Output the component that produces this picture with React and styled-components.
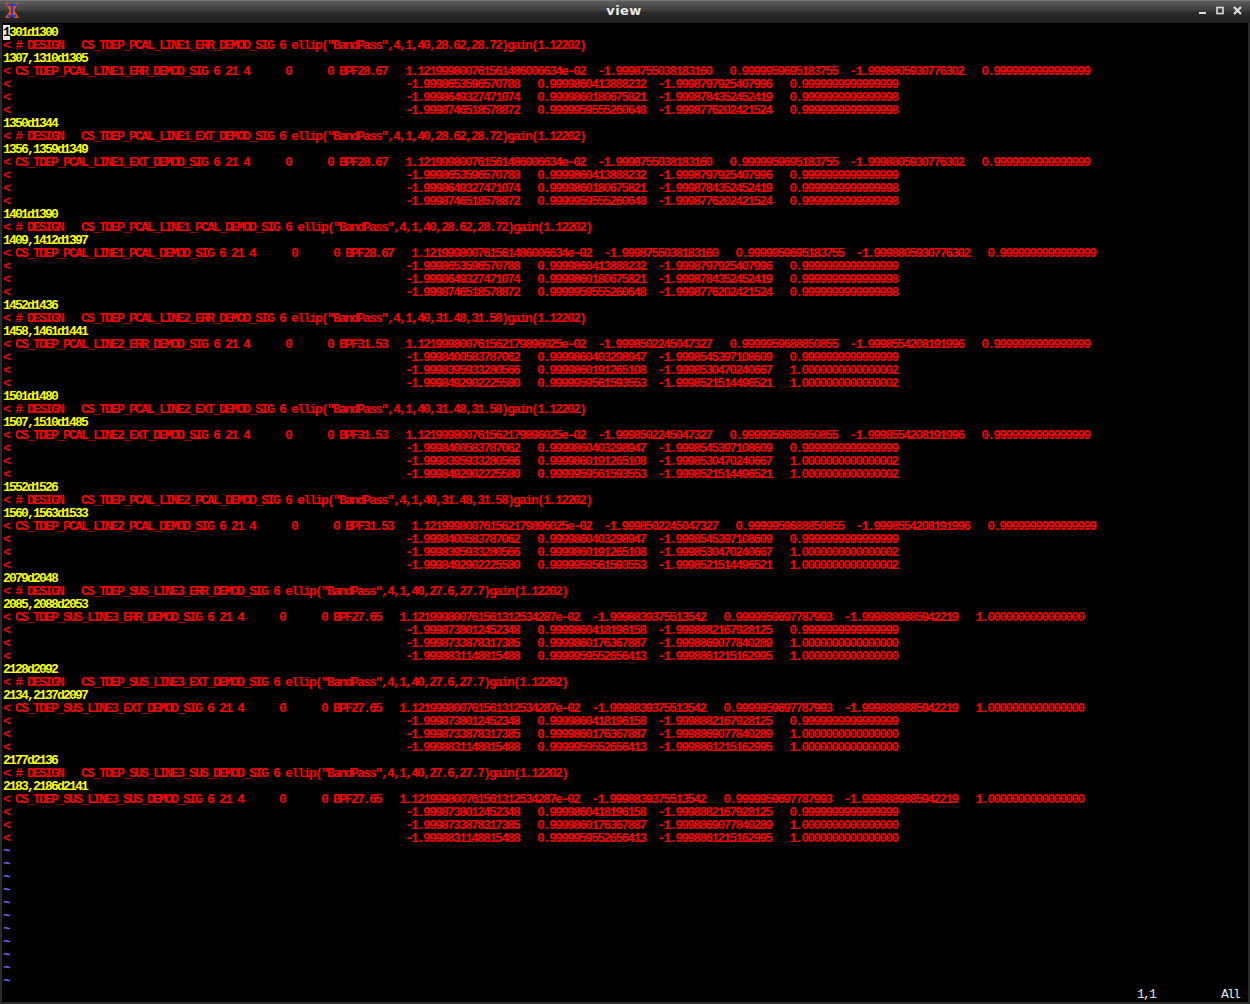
import React from "react";
import styled, { createGlobalStyle } from "styled-components";

const GlobalStyle = createGlobalStyle`
    html, body { margin:0; padding:0; background:#000; }
    body { width:1250px; height:1004px; overflow:hidden; }
`

const Frame = styled.div`
    display:flex;
    flex-direction:column;
    width:1250px;
    height:1004px;
    box-sizing:border-box;
    background:#2a2a2a;
`

const TitleBar = styled.div`
    display:flex;
    align-items:center;
    height:23px;
    flex:none;
    box-sizing:border-box;
    padding:0 6px 3px 4px;
    border-top:1px solid #777;
    background:linear-gradient(to bottom, #5c5c5c 0, #3c3c3c 10px, #2b2b2b 11px, #1f1f1f 22px);
`

const BarSide = styled.div`
    flex:1;
    display:flex;
    align-items:center;
    justify-content:${props => props.$end ? "flex-end" : "flex-start"};
    gap:5px;
`

const Title = styled.div`
    font:bold 13px "DejaVu Sans", sans-serif;
    letter-spacing:0.4px;
    color:#e8e8e8;
`

const Terminal = styled.pre`
    flex:1;
    margin:0 2px 2px 2px;
    padding:3px 0 0 1px;
    background:#000;
    font-family:"Liberation Mono", monospace;
    font-size:13px;
    font-weight:700;
    letter-spacing:-1.8px;
    line-height:13px;
    overflow:hidden;
`

const colors = { hunk:"#ffff00", removed:"#ff0000", tilde:"#6a6aff", status:"#e5e5e5" };

const Line = styled.div`
    height:13px;
    color:${props => colors[props.$kind]};
`

const StatusLine = styled.div`
    display:flex;
    gap:66px;
    height:13px;
    padding-left:1134px;
    color:${colors.status};
    font-weight:400;
`

const Cursor = styled.span`
    background:#e5e5e5;
    box-shadow:1px 0 0 #e5e5e5;
    color:#000;
`

const COEFS = {
    line1: [
        "1.121999800761561486006634e-02  -1.9998755038183160   0.9999959695183755  -1.9998805930776302   0.9999999999999999",
        "-1.9998653596570788   0.9999860413888232  -1.9998797925407996   0.9999999999999999",
        "-1.9998649327471074   0.9999860180675821  -1.9998784352452419   0.9999999999999998",
        "-1.9998746518578872   0.9999959555260648  -1.9998776202421524   0.9999999999999998",
    ],
    line2: [
        "1.121999800761562179896025e-02  -1.9998502245047327   0.9999959688850855  -1.9998554208191996   0.9999999999999999",
        "-1.9998400583787062   0.9999860403298947  -1.9998545397108609   0.9999999999999999",
        "-1.9998395933280566   0.9999860191265108  -1.9998530470240667   1.0000000000000002",
        "-1.9998492902225580   0.9999959561593553  -1.9998521514496521   1.0000000000000002",
    ],
    line3: [
        "1.121999800761561312534287e-02  -1.9998839375513542   0.9999959697787993  -1.9998889885942219   1.0000000000000000",
        "-1.9998738012452348   0.9999860418196158  -1.9998882167928125   0.9999999999999999",
        "-1.9998733878317385   0.9999860176367887  -1.9998869077840289   1.0000000000000000",
        "-1.9998831148815488   0.9999959552656413  -1.9998861215162995   1.0000000000000000",
    ],
};

const BLOCKS = [
    ["1301d1300", "PCAL_LINE1_ERR", "28.62,28.72", "1307,1310d1305", "BPF28.67", "line1"],
    ["1350d1344", "PCAL_LINE1_EXT", "28.62,28.72", "1356,1359d1349", "BPF28.67", "line1"],
    ["1401d1390", "PCAL_LINE1_PCAL", "28.62,28.72", "1409,1412d1397", "BPF28.67", "line1"],
    ["1452d1436", "PCAL_LINE2_ERR", "31.48,31.58", "1458,1461d1441", "BPF31.53", "line2"],
    ["1501d1480", "PCAL_LINE2_EXT", "31.48,31.58", "1507,1510d1485", "BPF31.53", "line2"],
    ["1552d1526", "PCAL_LINE2_PCAL", "31.48,31.58", "1560,1563d1533", "BPF31.53", "line2"],
    ["2079d2048", "SUS_LINE3_ERR", "27.6,27.7", "2085,2088d2053", "BPF27.65", "line3"],
    ["2128d2092", "SUS_LINE3_EXT", "27.6,27.7", "2134,2137d2097", "BPF27.65", "line3"],
    ["2177d2136", "SUS_LINE3_SUS", "27.6,27.7", "2183,2186d2141", "BPF27.65", "line3"],
];

function Block({ data, first }) {
    const [hunk, name, band, hunk2, bpf, coef] = data;
    const sig = `CS_TDEP_${name}_DEMOD_SIG`;
    const c = COEFS[coef];
    return (
        <>
            <Line $kind="hunk">{first ? <><Cursor>{hunk[0]}</Cursor>{hunk.slice(1)}</> : hunk}</Line>
            <Line $kind="removed">{`< # DESIGN   ${sig} 6 ellip("BandPass",4,1,40,${band})gain(1.12202)`}</Line>
            <Line $kind="hunk">{hunk2}</Line>
            <Line $kind="removed">{`< ${sig} 6 21 4      0      0 ${bpf}   ${c[0]}`}</Line>
            {c.slice(1).map(row => (
                <Line $kind="removed" key={row}>{"<".padEnd(67) + row}</Line>
            ))}
        </>
    );
}

function XLogo() {
    return (
        <svg width="16" height="17" viewBox="0 0 16 17">
            <path d="M1 1 L6 1 L15 16 L10 16 Z" fill="#e8500a" />
            <path d="M15 1 L11 1 L1 16 L5 16 Z" fill="#e8500a" />
            <path d="M3 3 H13 M8 3 V14 M4 14 H12" stroke="#1f3fd8" strokeWidth="2" fill="none" />
        </svg>
    );
}

function WinButtons() {
    return (
        <>
            <svg width="12" height="12" viewBox="0 0 12 12"><rect x="1" y="7" width="7" height="2" fill="#ddd" /></svg>
            <svg width="12" height="12" viewBox="0 0 12 12"><rect x="2" y="2.5" width="6" height="6" fill="none" stroke="#ddd" strokeWidth="1.6" /></svg>
            <svg width="12" height="12" viewBox="0 0 12 12"><path d="M2 2 L9 9 M9 2 L2 9" stroke="#ddd" strokeWidth="2.2" /></svg>
        </>
    );
}

export default function App() {
    const tildes = Array.from({ length: 11 }, (_, i) => i);
    return (
        <Frame>
            <GlobalStyle />
            <TitleBar>
                <BarSide><XLogo /></BarSide>
                <Title>view</Title>
                <BarSide $end><WinButtons /></BarSide>
            </TitleBar>
            <Terminal>
                {BLOCKS.map((b, i) => <Block key={b[0]} data={b} first={i === 0} />)}
                {tildes.map(i => <Line $kind="tilde" key={i}>~</Line>)}
                <StatusLine><span>1,1</span><span>All</span></StatusLine>
            </Terminal>
        </Frame>
    );
}
